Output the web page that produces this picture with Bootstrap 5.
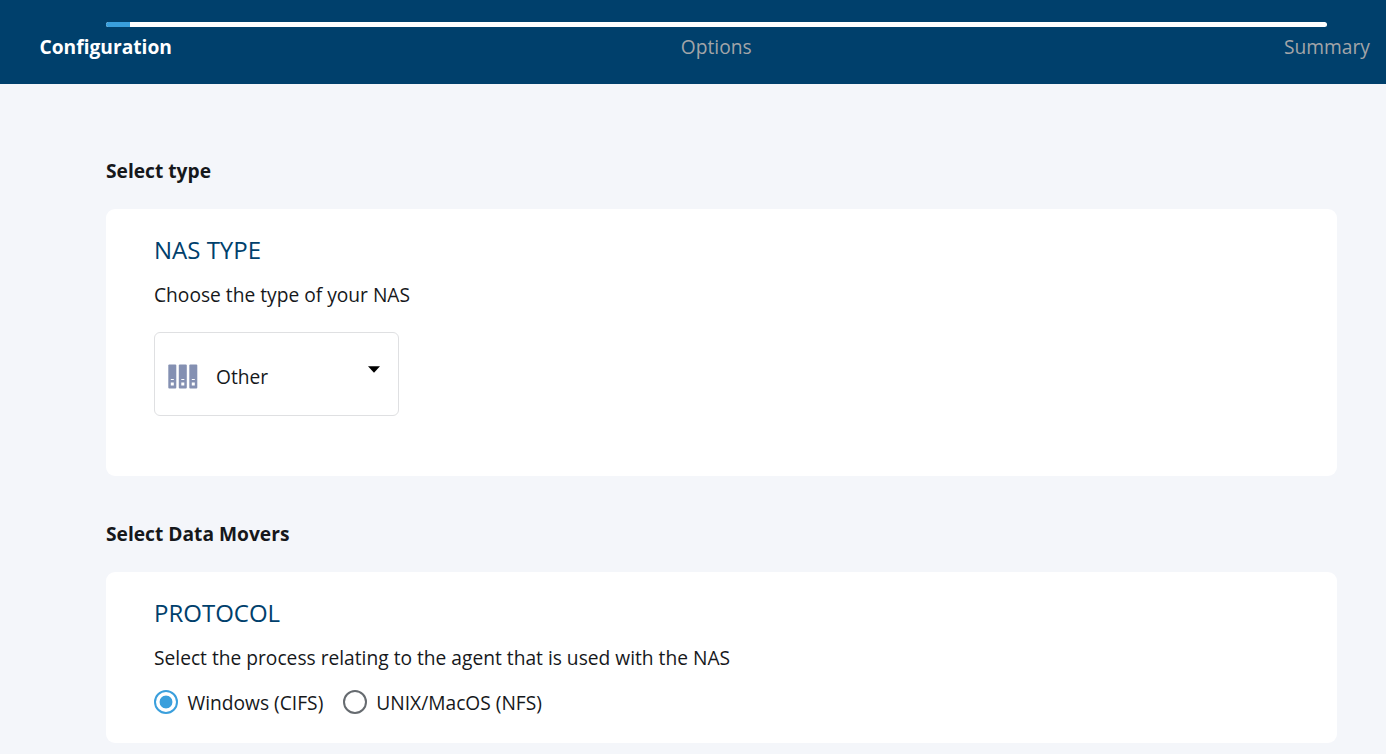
<!DOCTYPE html>
<html lang="en">
<head>
<meta charset="utf-8">
<meta name="viewport" content="width=device-width, initial-scale=1">
<title>NAS configuration</title>
<link rel="stylesheet" href="https://cdn.jsdelivr.net/npm/bootstrap@5.3.0/dist/css/bootstrap.min.css">
<style>
body{font-family:"Open Sans","Noto Sans",sans-serif;font-size:19.21px;line-height:28px;color:#16181b;background:#f4f6fa;height:754px;overflow:hidden}
.wizard-head{height:84px;background:#00406c;padding:21.5px 16px 0 40px}
.wizard-head .progress{height:5px;margin:0 43px 0 66px;background:#fff;border-radius:3px}
.wizard-head .progress-bar{background:#3a9fdc;width:2%}
.steps{height:28px;margin:6px -23px 0 0;color:#a3a5a8}
.steps .active{color:#fff}
.step-item{width:132px;text-align:center}
.step-item.active{margin-left:-.5px}
.content{padding:73px 49.500px 0 106px}
.section-title{font-size:19.2px;line-height:28px;margin:0 0 24px;font-weight:700}
.panel{border:0;border-radius:9px;padding:24px 48px}
.panel-type{height:267px;margin-bottom:44px}
.panel-protocol{height:171px}
.panel h3{font-size:24px;line-height:34px;color:#00406c;margin:0 0 14px;font-weight:400}
.nas-select{width:245px;height:84px;border:1px solid #dfe0e2;border-radius:6px;padding:5px 18px 0 13px;margin-top:23px;background:#fff;color:inherit;font-size:inherit}
.nas-label{margin-left:18px}
.caret-icon{margin-bottom:15px}
.protocols{gap:19.500px;margin-top:17px}
.protocols label{gap:9.500px}
.form-check-input{width:24px;height:24px;margin:-2px 0 0;border:2px solid #666b70;background:#fff}
.form-check-input:checked{border-color:#3a9fdc;background:radial-gradient(circle,#3a9fdc 0 6px,#fff 6.8px)}
</style>
</head>
<body>
<header class="wizard-head">
  <div class="progress"><div class="progress-bar"></div></div>
  <nav class="steps d-flex justify-content-between"><span class="step-item active fw-bold">Configuration</span><span class="step-item">Options</span><span class="step-item">Summary</span></nav>
</header>
<main class="content">
  <h2 class="section-title">Select type</h2>
  <section class="card panel panel-type">
    <h3>NAS TYPE</h3>
    <p class="m-0">Choose the type of your NAS</p>
    <button type="button" class="nas-select d-flex align-items-center">
      <svg width="30" height="25" viewBox="0 0 30 25"><g fill="#8490b2"><rect x=".3" y=".5" width="8" height="24" rx="1"/><rect x="10.800" y=".5" width="8" height="24" rx="1"/><rect x="21.300" y=".5" width="8" height="24" rx="1"/></g><path fill="#fff" d="M2.800 15h3v1h-3zM2.800 18.500h3v3h-3zM13.300 15h3v1h-3zM13.300 18.500h3v3h-3zM23.800 15h3v1h-3zM23.800 18.500h3v3h-3z"/></svg>
      <span class="nas-label">Other</span>
      <svg class="caret-icon ms-auto" width="12" height="7" viewBox="0 0 12 7"><path d="M0 .3h12L6 6.700z"/></svg>
    </button>
  </section>
  <h2 class="section-title">Select Data Movers</h2>
  <section class="card panel panel-protocol">
    <h3>PROTOCOL</h3>
    <p class="m-0">Select the process relating to the agent that is used with the NAS</p>
    <div class="protocols d-flex">
      <label class="d-flex align-items-center"><input class="form-check-input" type="radio" name="protocol" checked><span>Windows (CIFS)</span></label>
      <label class="d-flex align-items-center"><input class="form-check-input" type="radio" name="protocol"><span>UNIX/MacOS (NFS)</span></label>
    </div>
  </section>
</main>
<script src="https://cdn.jsdelivr.net/npm/bootstrap@5.3.0/dist/js/bootstrap.bundle.min.js"></script>
</body>
</html>
